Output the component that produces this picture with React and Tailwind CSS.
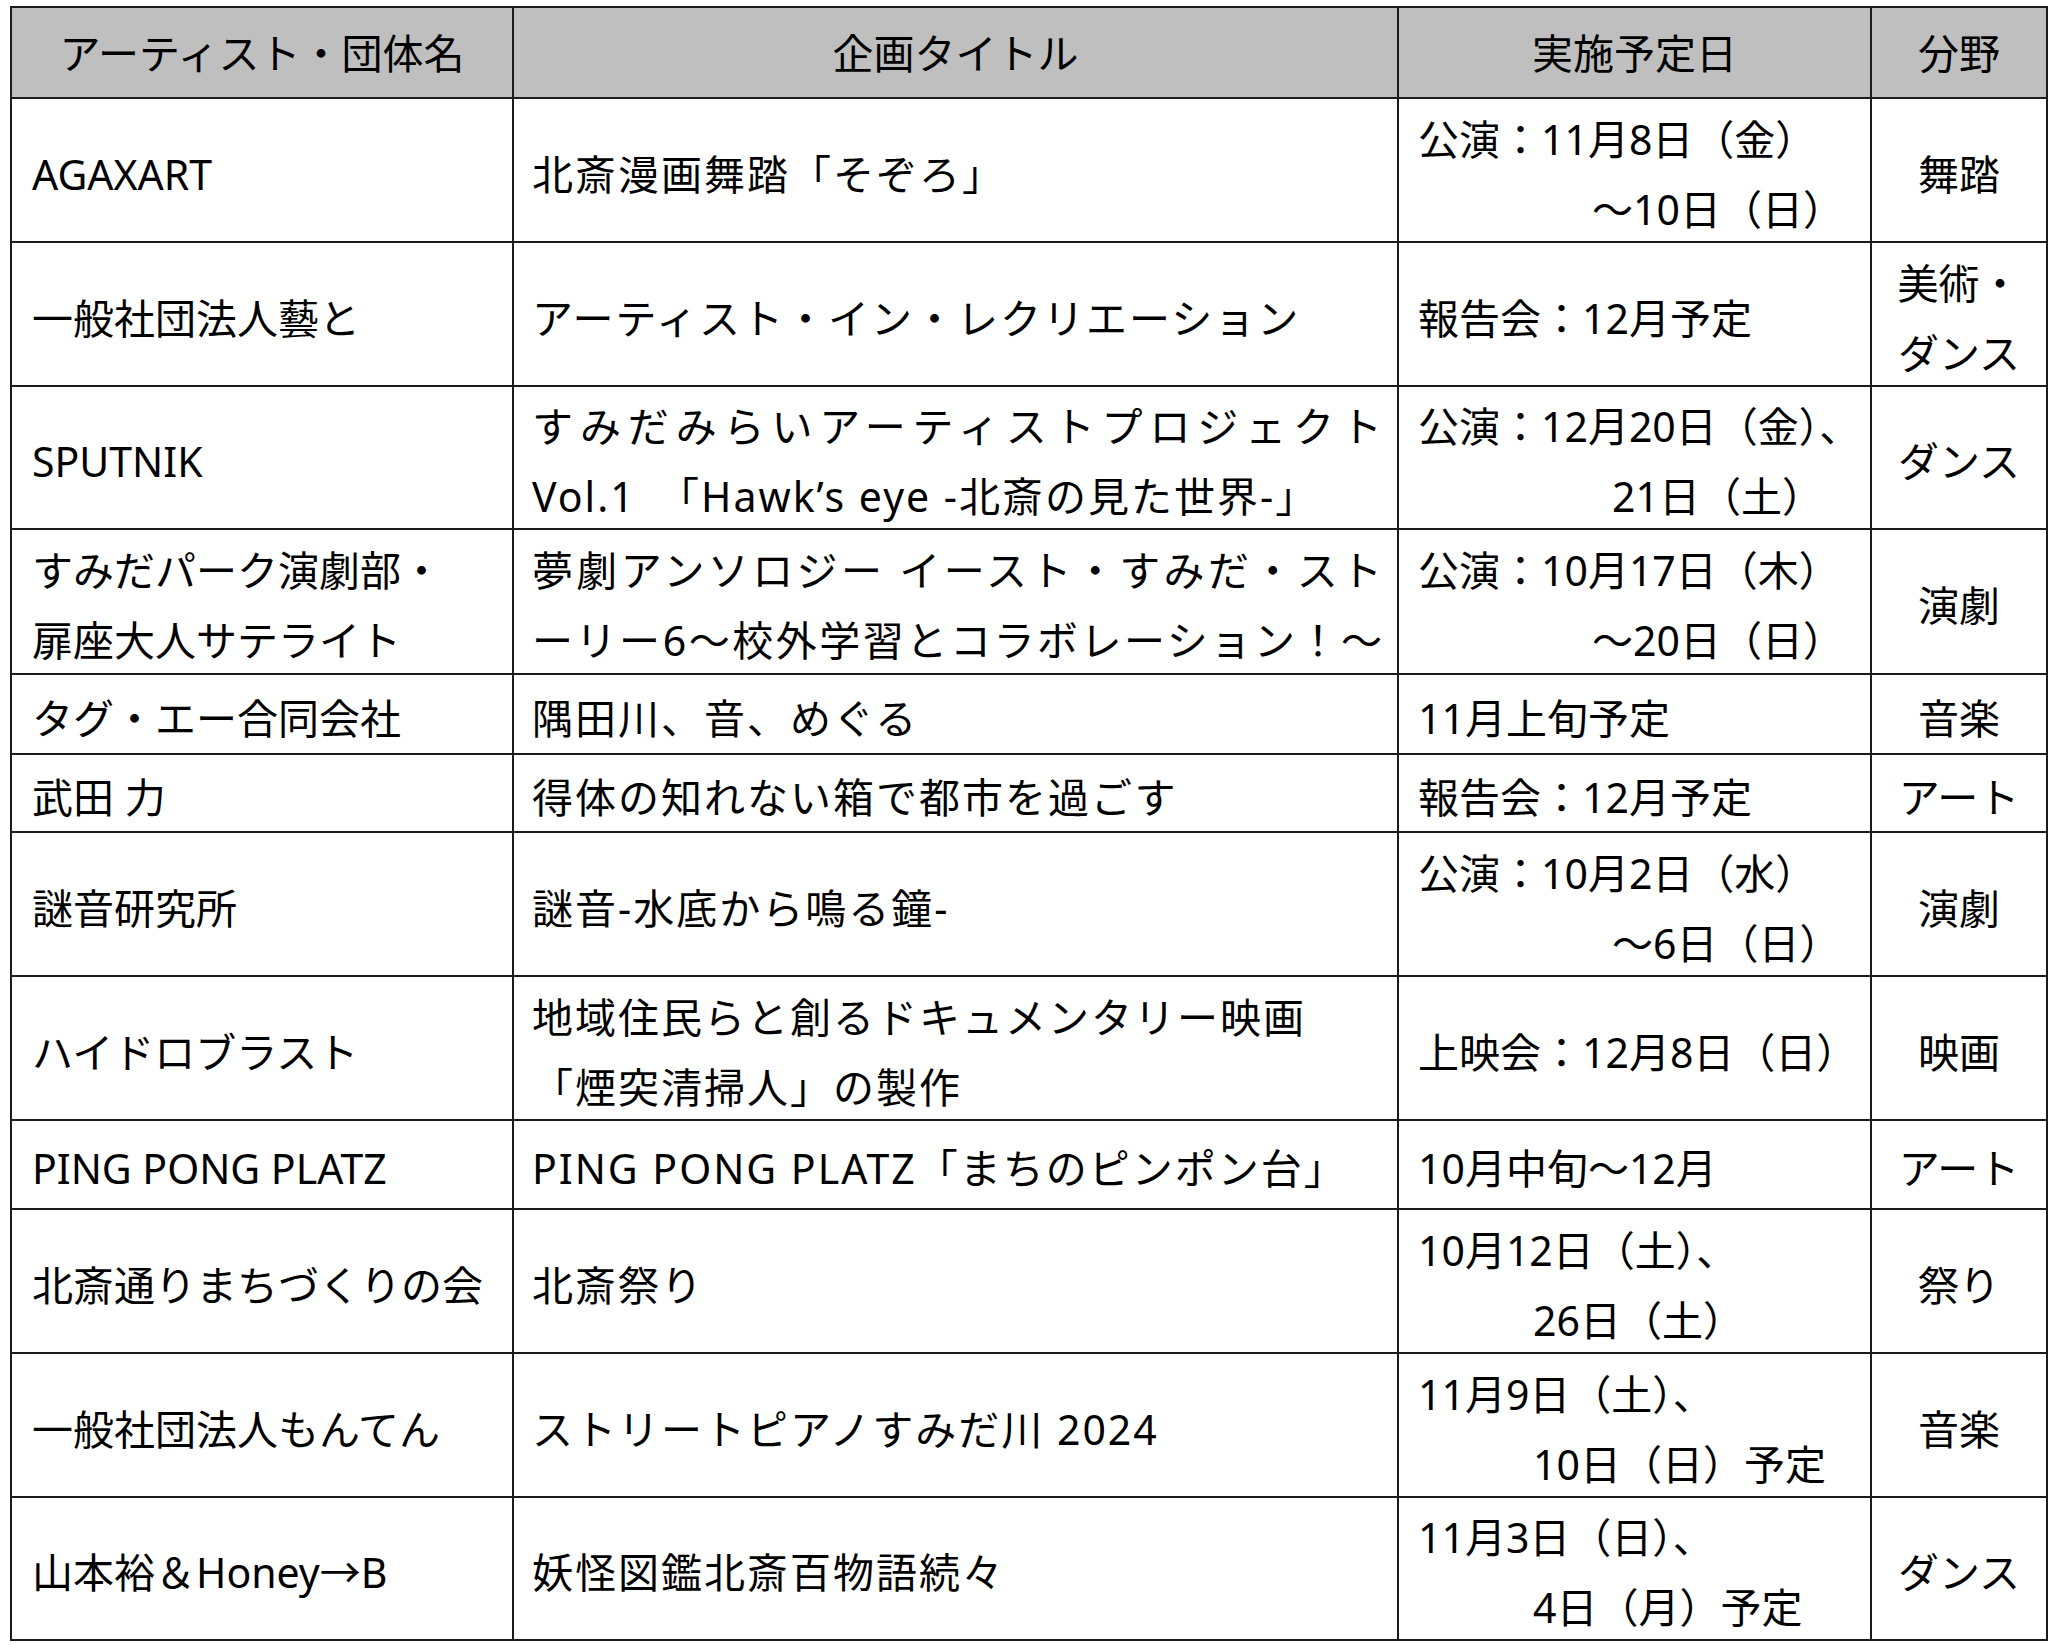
const rows = [
  {
    h: 'h-[144px] grid-rows-[144px]',
    a: ['AGAXART'],
    b: [{ t: '北斎漫画舞踏「そぞろ」' }],
    c: [{ t: '公演：11月8日（金）' }, { t: '～10日（日）', i: 'pl-[174px]' }],
    d: ['舞踏'],
  },
  {
    h: 'h-[144px] grid-rows-[144px]',
    a: ['一般社団法人藝と'],
    b: [{ t: 'アーティスト・イン・レクリエーション' }],
    c: [{ t: '報告会：12月予定' }],
    d: ['美術・', 'ダンス'],
  },
  {
    h: 'h-[143px] grid-rows-[143px]',
    a: ['SPUTNIK'],
    b: [
      { t: 'すみだみらいアーティストプロジェクト', j: true },
      { t: 'Vol.1　「Hawk’s eye -北斎の見た世界-」' },
    ],
    c: [{ t: '公演：12月20日（金）、' }, { t: '21日（土）', i: 'pl-[194px]' }],
    d: ['ダンス'],
  },
  {
    h: 'h-[145px] grid-rows-[145px]',
    a: ['すみだパーク演劇部・', '扉座大人サテライト'],
    b: [
      { t: '夢劇アンソロジー イースト・すみだ・スト', j: true },
      { t: 'ーリー6～校外学習とコラボレーション！～', j: true },
    ],
    c: [{ t: '公演：10月17日（木）' }, { t: '～20日（日）', i: 'pl-[174px]' }],
    d: ['演劇'],
  },
  {
    h: 'h-[80px] grid-rows-[80px]',
    a: ['タグ・エー合同会社'],
    b: [{ t: '隅田川、音、めぐる' }],
    c: [{ t: '11月上旬予定' }],
    d: ['音楽'],
  },
  {
    h: 'h-[78px] grid-rows-[78px]',
    a: ['武田 力'],
    b: [{ t: '得体の知れない箱で都市を過ごす' }],
    c: [{ t: '報告会：12月予定' }],
    d: ['アート'],
  },
  {
    h: 'h-[144px] grid-rows-[144px]',
    a: ['謎音研究所'],
    b: [{ t: '謎音-水底から鳴る鐘-' }],
    c: [{ t: '公演：10月2日（水）' }, { t: '～6日（日）', i: 'pl-[194px]' }],
    d: ['演劇'],
  },
  {
    h: 'h-[144px] grid-rows-[144px]',
    a: ['ハイドロブラスト'],
    b: [{ t: '地域住民らと創るドキュメンタリー映画' }, { t: '「煙突清掃人」の製作' }],
    c: [{ t: '上映会：12月8日（日）' }],
    d: ['映画'],
  },
  {
    h: 'h-[89px] grid-rows-[89px]',
    a: ['PING PONG PLATZ'],
    b: [{ t: 'PING PONG PLATZ「まちのピンポン台」' }],
    c: [{ t: '10月中旬～12月' }],
    d: ['アート'],
  },
  {
    h: 'h-[144px] grid-rows-[144px]',
    a: ['北斎通りまちづくりの会'],
    b: [{ t: '北斎祭り' }],
    c: [{ t: '10月12日（土）、' }, { t: '26日（土）', i: 'pl-[115px]' }],
    d: ['祭り'],
  },
  {
    h: 'h-[144px] grid-rows-[144px]',
    a: ['一般社団法人もんてん'],
    b: [{ t: 'ストリートピアノすみだ川 2024' }],
    c: [{ t: '11月9日（土）、' }, { t: '10日（日）予定', i: 'pl-[115px]' }],
    d: ['音楽'],
  },
  {
    h: 'h-[143px] grid-rows-[143px]',
    a: ['山本裕＆Honey→B'],
    b: [{ t: '妖怪図鑑北斎百物語続々' }],
    c: [{ t: '11月3日（日）、' }, { t: '4日（月）予定', i: 'pl-[115px]' }],
    d: ['ダンス'],
  },
];

const cell = 'border-r-2 border-b-2 border-[#1c1c1c] flex flex-col justify-center min-h-0 whitespace-nowrap';

export default function App() {
  return (
    <div className="w-[2051px] h-[1645px] bg-white overflow-hidden font-['Noto_Sans','Noto_Sans_CJK_JP',sans-serif] text-[41px] leading-[70px] text-black">
      <div className="ml-[10px] mt-[6px] w-fit border-l-2 border-t-2 border-[#1c1c1c]">
        <div className="grid grid-cols-[502px_885px_473px_176px] grid-rows-[91px] h-[91px] bg-[#bfbfbf]">
          <div className={cell + ' items-center pt-[1px]'}>アーティスト・団体名</div>
          <div className={cell + ' items-center pt-[1px]'}>企画タイトル</div>
          <div className={cell + ' items-center pt-[1px]'}>実施予定日</div>
          <div className={cell + ' items-center pt-[1px]'}>分野</div>
        </div>
        {rows.map((r, idx) => (
          <div key={idx} className={'grid grid-cols-[502px_885px_473px_176px] ' + r.h}>
            <div className={cell + ' pt-[7px] pl-[20px]'}>
              {r.a.map((t) => (
                <div key={t}>{t}</div>
              ))}
            </div>
            <div className={cell + ' pt-[7px] pl-[18px] pr-[13px] tracking-[2px]'}>
              {r.b.map((l) => (
                <div key={l.t} className={l.j ? 'text-justify [text-align-last:justify]' : ''}>
                  {l.t}
                </div>
              ))}
            </div>
            <div className={cell + ' pt-[7px] pl-[19px]'}>
              {r.c.map((l) => (
                <div key={l.t} className={l.i || ''}>
                  {l.t}
                </div>
              ))}
            </div>
            <div className={cell + ' pt-[7px] items-center text-center'}>
              {r.d.map((t) => (
                <div key={t}>{t}</div>
              ))}
            </div>
          </div>
        ))}
      </div>
    </div>
  );
}
